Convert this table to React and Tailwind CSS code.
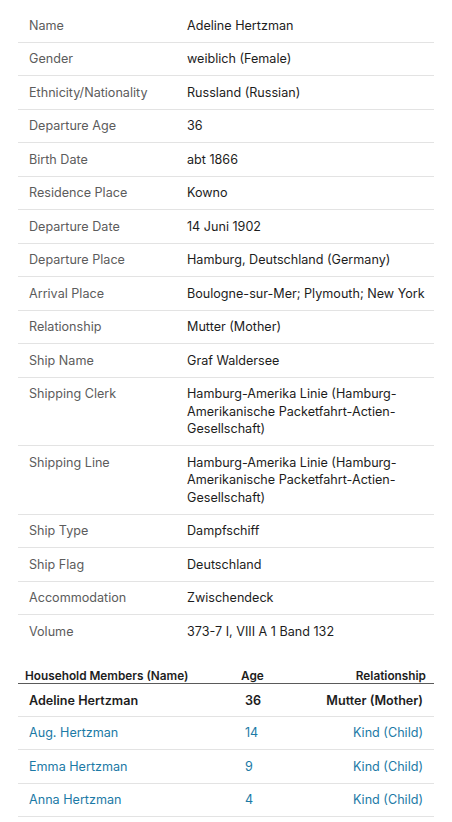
import React from "react";

const rows = [
  ["Name", "Adeline Hertzman"],
  ["Gender", "weiblich (Female)"],
  ["Ethnicity/Nationality", "Russland (Russian)"],
  ["Departure Age", "36"],
  ["Birth Date", "abt 1866"],
  ["Residence Place", "Kowno"],
  ["Departure Date", "14 Juni 1902"],
  ["Departure Place", "Hamburg, Deutschland (Germany)"],
  ["Arrival Place", "Boulogne-sur-Mer; Plymouth; New York"],
  ["Relationship", "Mutter (Mother)"],
  ["Ship Name", "Graf Waldersee"],
  ["Shipping Clerk", "Hamburg-Amerika Linie (Hamburg-Amerikanische Packetfahrt-Actien-Gesellschaft)"],
  ["Shipping Line", "Hamburg-Amerika Linie (Hamburg-Amerikanische Packetfahrt-Actien-Gesellschaft)"],
  ["Ship Type", "Dampfschiff"],
  ["Ship Flag", "Deutschland"],
  ["Accommodation", "Zwischendeck"],
  ["Volume", "373-7 I, VIII A 1 Band 132"],
];

const members = [
  ["Aug. Hertzman", "14", "Kind (Child)"],
  ["Emma Hertzman", "9", "Kind (Child)"],
  ["Anna Hertzman", "4", "Kind (Child)"],
];

export default function App() {
  return (
    <div
      className="bg-white px-[18px] pt-[9px] pb-4 text-[12.6px] leading-[17.5px]"
      style={{ fontFamily: "Inter, 'Noto Sans', sans-serif" }}
    >
      <div className="flex flex-col">
        {rows.map(([k, v], i) => (
          <div
            key={k}
            className={
              "flex py-[7.5px] " +
              (i < rows.length - 1 ? "border-b border-[#e3e3e3]" : "")
            }
          >
            <div className="w-[169px] shrink-0 pl-[11px] text-[#5c5c5c]">{k}</div>
            <div className="min-w-0 flex-1 text-[#1d1d1d]">{v}</div>
          </div>
        ))}
      </div>

      <div className="mt-[15px]">
        <div className="flex border-b border-[#5a5a5a] pb-0 pt-[6px] text-[11.8px] leading-[14px] font-semibold text-[#1d1d1d]">
          <div className="w-[216px] shrink-0 pl-[7px]">Household Members (Name)</div>
          <div className="w-[80px] shrink-0 pl-[7px]">Age</div>
          <div className="flex-1 pr-[8px] text-right">Relationship</div>
        </div>
        <div className="flex border-b border-[#e3e3e3] pt-[8px] pb-[7px] font-semibold text-[#1d1d1d]">
          <div className="w-[216px] shrink-0 pl-[11px]">Adeline Hertzman</div>
          <div className="w-[80px] shrink-0 pl-[11px]">36</div>
          <div className="flex-1 pr-[11px] text-right">Mutter (Mother)</div>
        </div>
        {members.map(([n, a, r]) => (
          <div key={n} className="flex border-b border-[#e3e3e3] py-[7.4px] text-[#1c7aa6]">
            <div className="w-[216px] shrink-0 pl-[11px]">{n}</div>
            <div className="w-[80px] shrink-0 pl-[11px]">{a}</div>
            <div className="flex-1 pr-[11px] text-right">{r}</div>
          </div>
        ))}
      </div>
    </div>
  );
}
